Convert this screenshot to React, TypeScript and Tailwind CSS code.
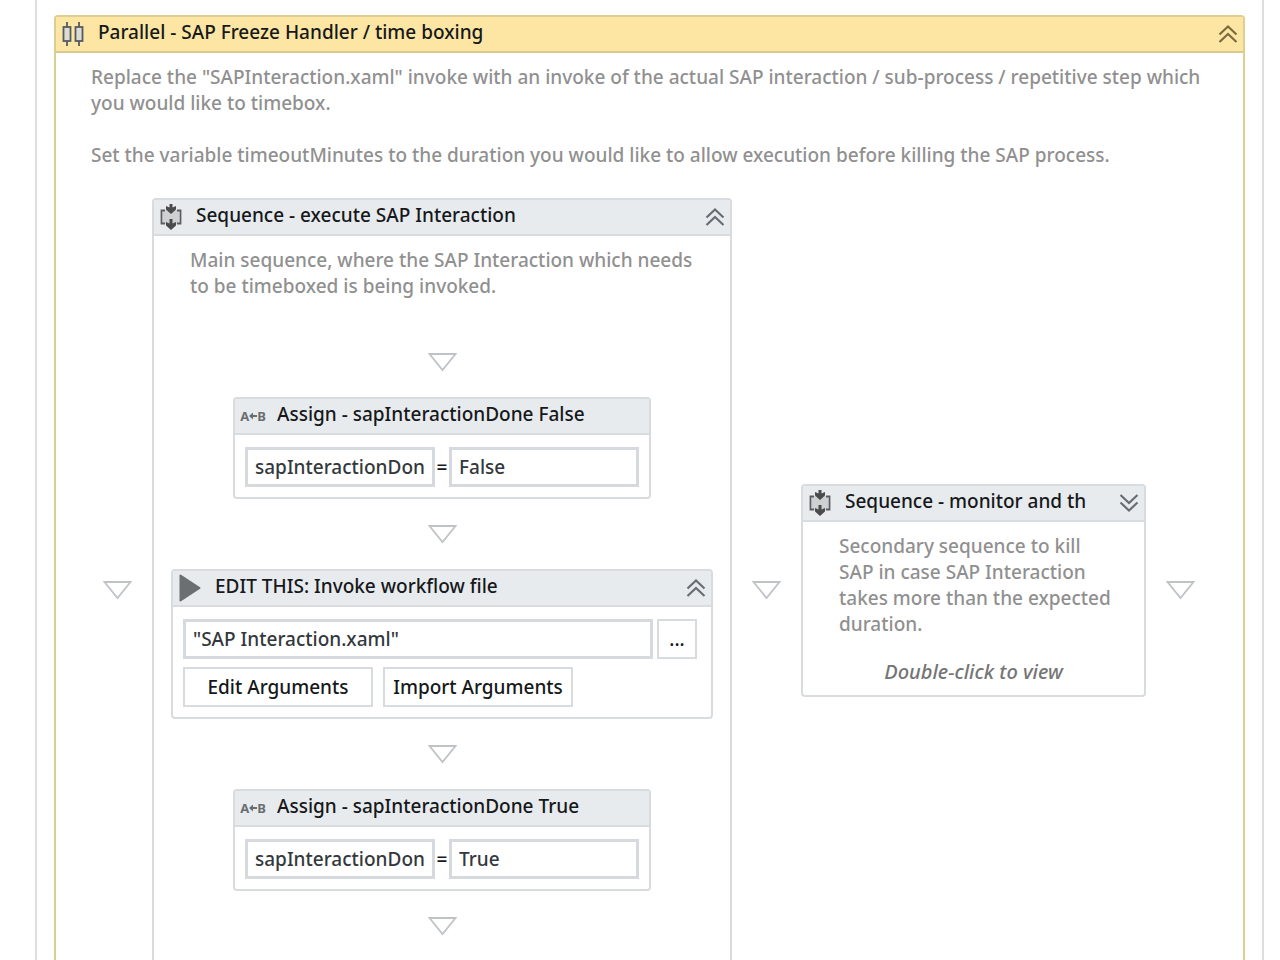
import React, { useState } from 'react';

interface CardProps {
    title: string;
    icon: React.ReactNode;
    width: string;
    accent?: boolean;
    toggle?: 'collapse' | 'expand';
    children: React.ReactNode;
}

const ParallelIcon = () => (
    <svg width="24" height="26" viewBox="0 0 24 26" fill="#dcdcd2" stroke="#555a62" strokeWidth="1.800" aria-hidden="true">
        <path d="M5 1v5M5 20v5M17 1v5M17 20v5" />
        <rect x="1.500" y="6" width="7" height="14" />
        <rect x="13.500" y="6" width="7" height="14" />
    </svg>
);

const SequenceIcon = () => (
    <svg width="24" height="28" viewBox="0 0 24 28" aria-hidden="true">
        <rect x="3" y="7" width="16" height="14" fill="#cfd0d1" />
        <path d="M5 7.500H1.500v13H5M17 7.500h3.500v13H17" fill="none" stroke="#5a5d61" strokeWidth="1.800" />
        <path d="M9.500 1h3v3.500L16 3V6.500l-5 4.500L6 6.500V3l3.500 1.500z" fill="#4a4b4d" />
        <path d="M9.500 16h3v4.500L16 19v3.500l-5 4.500-5-4.500V19l3.500 1.500z" fill="#4a4b4d" />
    </svg>
);

const AssignIcon = () => (
    <span className="flex items-center text-[13px] leading-none font-bold text-[#6b6e71]" aria-hidden="true">
        A
        <svg width="8" height="8" viewBox="0 0 8 8" fill="#6b6e71">
            <path d="M0 4l4-3.500V3h4v2H4v2.500z" />
        </svg>
        B
    </span>
);

const InvokeIcon = () => (
    <svg width="24" height="28" viewBox="0 0 24 28" aria-hidden="true">
        <path d="M1.500 1.500L20.500 14L1.500 26.500z" fill="#6c6f71" stroke="#6c6f71" strokeWidth="2" strokeLinejoin="round" />
    </svg>
);

const DownArrow = () => (
    <svg className="shrink-0" width="29" height="20" viewBox="0 0 29 20" fill="#fff" stroke="#bfc2c6" strokeWidth="1.800" aria-hidden="true">
        <path d="M1.500 2h26L14.500 18z" />
    </svg>
);

const Card: React.FC<CardProps> = ({ title, icon, width, accent, toggle, children }) => (
    <section className={`${width} shrink-0 rounded-sm border-2 bg-white ${accent ? 'border-[#dccf92]' : 'border-[#d9dcdf]'}`}>
        <header
            className={`flex h-9 items-center border-b-2 pr-1 pl-1 ${accent ? 'border-[#d9cb90] bg-[#fde6a4]' : 'border-[#d9dcdf] bg-[#e7ebee]'
                }`}
        >
            <span className="flex w-7 shrink-0 justify-center">{icon}</span>
            <h2 className="ml-2.5 flex-1 overflow-hidden pb-1 whitespace-nowrap text-[#16181a]">{title}</h2>
            {toggle && (
                <button type="button" aria-label={toggle} className="shrink-0">
                    <svg
                        className={toggle === 'expand' ? 'rotate-180' : ''}
                        width="22"
                        height="22"
                        viewBox="0 0 22 22"
                        fill="none"
                        stroke={accent ? '#7b6c40' : '#686d74'}
                        strokeWidth="2.200"
                    >
                        <path d="M2.500 11.500L11 3.500l8.500 8M2.500 19L11 11l8.500 8" />
                    </svg>
                </button>
            )}
        </header>
        {children}
    </section>
);

const inputStyle = 'h-10 min-w-0 flex-1 border-[3px] border-[#d6dade] bg-white px-[7px] text-[#33383c] outline-none';
const buttonStyle = 'h-10 border-2 border-[#d9dcdf] bg-white text-[#16181a]';

const AssignCard = ({ value }: { value: string }) => {
    const [target, setTarget] = useState('sapInteractionDon');
    const [expression, setExpression] = useState(value);

    return (
        <Card title={`Assign - sapInteractionDone ${value}`} icon={<AssignIcon />} width="w-[418px]">
            <div className="flex items-center px-2.5 pt-3 pb-2.5">
                <input aria-label="To" className={inputStyle} value={target} onChange={(e) => setTarget(e.target.value)} />
                <span className="w-3.5 text-center text-[#16181a]">=</span>
                <input aria-label="Value" className={inputStyle} value={expression} onChange={(e) => setExpression(e.target.value)} />
            </div>
        </Card>
    );
};

const InvokeCard = () => {
    const [file, setFile] = useState('"SAP Interaction.xaml"');

    return (
        <Card title="EDIT THIS: Invoke workflow file" icon={<InvokeIcon />} width="w-[542px]" toggle="collapse">
            <div className="pt-3 pr-3.5 pb-2.5 pl-2.5">
                <div className="flex gap-1">
                    <input aria-label="Workflow file" className={inputStyle} value={file} onChange={(e) => setFile(e.target.value)} />
                    <button type="button" aria-label="Browse" className={`${buttonStyle} w-10`}>...</button>
                </div>
                <div className="mt-2 flex gap-2.5">
                    <button type="button" className={`${buttonStyle} w-[190px]`}>Edit Arguments</button>
                    <button type="button" className={`${buttonStyle} w-[190px]`}>Import Arguments</button>
                </div>
            </div>
        </Card>
    );
};

const App: React.FC = () => (
    <main className="h-screen overflow-hidden bg-white pr-4 pl-[35px] font-['Noto_Sans',sans-serif] text-[19px] leading-[26px] font-medium">
        <div className="min-h-full border-x-2 border-[#dcdfe2] px-[17px] pt-[15px]">
            <Card title="Parallel - SAP Freeze Handler / time boxing" icon={<ParallelIcon />} width="w-full" accent toggle="collapse">
                <div className="px-[35px] pt-[11px] text-[#909090]">
                    <p>
                        Replace the "SAPInteraction.xaml" invoke with an invoke of the actual SAP interaction / sub-process / repetitive
                        step which you would like to timebox.
                    </p>
                    <p className="mt-[26px]">
                        Set the variable timeoutMinutes to the duration you would like to allow execution before killing the SAP process.
                    </p>
                </div>

                {/* Parallel branches */}
                <div className="mt-[30px] flex items-center justify-center gap-5 pr-px pb-10">
                    <DownArrow />
                    <Card title="Sequence - execute SAP Interaction" icon={<SequenceIcon />} width="w-[580px]" toggle="collapse">
                        <p className="px-9 pt-[11px] text-[#909090]">
                            Main sequence, where the SAP Interaction which needs to be timeboxed is being invoked.
                        </p>
                        <div className="flex flex-col items-center gap-[25px] pt-[53px] pb-11">
                            <DownArrow />
                            <AssignCard value="False" />
                            <DownArrow />
                            <InvokeCard />
                            <DownArrow />
                            <AssignCard value="True" />
                            <DownArrow />
                        </div>
                    </Card>
                    <DownArrow />
                    <Card title="Sequence - monitor and th" icon={<SequenceIcon />} width="w-[345px]" toggle="expand">
                        <p className="pr-8 pl-9 pt-[11px] text-[#909090]">
                            Secondary sequence to kill SAP in case SAP Interaction takes more than the expected duration.
                        </p>
                        <p className="pt-[22px] pb-2.5 text-center text-[20px] text-[#757575] italic">Double-click to view</p>
                    </Card>
                    <DownArrow />
                </div>
            </Card>
        </div>
    </main>
);

export default App;
